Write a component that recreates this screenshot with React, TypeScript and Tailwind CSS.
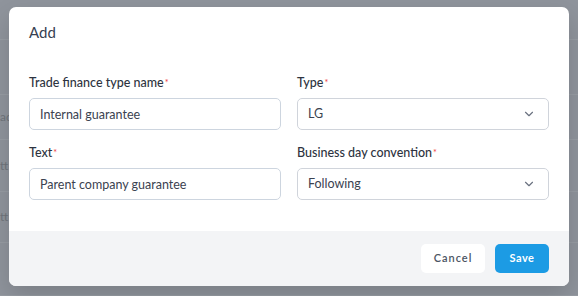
import { ChevronDown } from 'lucide-react'

const ROWS = [
  { h: 'h-[40px]', label: '' },
  { h: 'h-[55px]', label: '' },
  { h: 'h-[45px]', label: 'ad' },
  { h: 'h-[52px]', label: 'tt' },
  { h: 'h-[51px]', label: 'tt' },
  { h: 'h-[53px]', label: '' },
]

function Label({ children }: { children: React.ReactNode }) {
  return (
    <label className="block mb-1.5 text-[12.5px] leading-[18px] font-medium text-[#2d3340]">
      {children}
      <sup className="text-[#ef4444] text-[9px] ml-px relative -top-px">*</sup>
    </label>
  )
}

function TextInput({ value }: { value: string }) {
  return (
    <input
      readOnly
      value={value}
      className="w-full h-8 px-[10px] rounded-[5px] border border-[#cdd5df] bg-white text-[12.5px] text-[#3b4250] outline-none"
    />
  )
}

function Select({ value }: { value: string }) {
  return (
    <div className="w-full h-8 pl-[10px] pr-[12px] rounded-[5px] border border-[#d0d4db] bg-white flex items-center justify-between text-[12.5px] text-[#3b4250]">
      <span>{value}</span>
      <ChevronDown size={14} strokeWidth={2} className="text-[#6b7280]" />
    </div>
  )
}

export default function App() {
  return (
    <div className="relative w-[578px] h-[296px] overflow-hidden bg-[#8f949c] font-['Lato',sans-serif]">
      {/* page behind the dialog */}
      <div className="flex flex-col">
        {ROWS.map((r, i) => (
          <div key={i} className={`${r.h} border-b border-[#979ca3] flex items-center text-[12px] text-[#6f747b]`}>
            <span>{r.label}</span>
          </div>
        ))}
      </div>

      {/* dialog */}
      <div className="absolute left-[9px] top-[7px] w-[560px] h-[279px] rounded-[7px] bg-white shadow-[0_10px_25px_rgba(0,0,0,0.15)] overflow-hidden flex flex-col">
        <div className="px-5 pt-[14px] flex-1">
          <h2 className="text-[15px] leading-[22px] text-[#374151]">Add</h2>
          <div className="grid grid-cols-2 gap-x-4 gap-y-3.5 mt-[31px]">
            <div>
              <Label>Trade finance type name</Label>
              <TextInput value="Internal guarantee" />
            </div>
            <div>
              <Label>Type</Label>
              <Select value="LG" />
            </div>
            <div>
              <Label>Text</Label>
              <TextInput value="Parent company guarantee" />
            </div>
            <div>
              <Label>Business day convention</Label>
              <Select value="Following" />
            </div>
          </div>
        </div>
        <div className="h-[55px] bg-[#f3f4f6] px-5 flex items-center justify-end gap-[10px]">
          <button className="h-[29px] w-[64px] rounded-[5px] bg-white text-[11px] font-semibold tracking-[1px] text-[#4b5563]">
            Cancel
          </button>
          <button className="h-[29px] w-[54px] rounded-[5px] bg-[#1c9be4] text-[11px] font-bold tracking-[0.5px] text-white">
            Save
          </button>
        </div>
      </div>
    </div>
  )
}
